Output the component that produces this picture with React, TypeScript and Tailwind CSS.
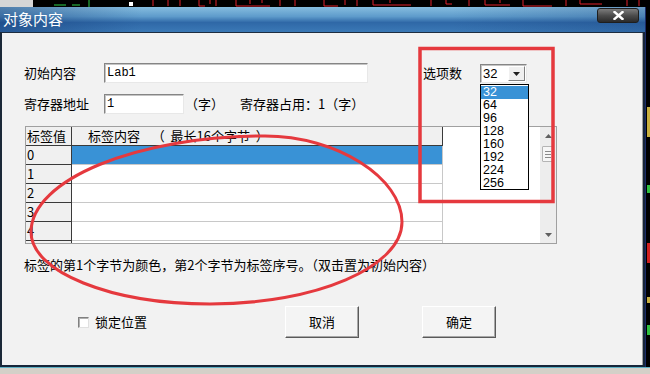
import type { ReactNode } from 'react';

const rows = ['0', '1', '2', '3', '4', ''];
const options = ['32', '64', '96', '128', '160', '192', '224', '256'];

function TopStrip() {
  return (
    <svg width="650" height="7" className="block shrink-0">
      <rect x="0" y="0" width="650" height="7" fill="#000" />
      <rect x="0" y="0" width="33" height="7" fill="#d6d6d6" />
      <path d="M54 5h12M72 5h8M89 0v7" stroke="#2fd04a" strokeWidth="1" fill="none" />
      <rect x="129" y="2" width="4" height="4" fill="#fff" />
      <path
        d="M153 0v6M168 0v6M180 0v6M199 0v6h6M210 0v4M216 0v6M236 0v6h34M250 0v4M262 0v3M280 0v6M295 0v6M324 0v6h14M345 0v5M357 0v6M373 0v5h38M390 0v3M431 0v6M446 0v4h6M469 0v6M485 0v5h25M500 0v3M523 0v6h29M566 0v6M580 0v4h22M627 0v6M639 0v6"
        stroke="#e0202a"
        strokeWidth="1"
        fill="none"
      />
    </svg>
  );
}

function RightStrip() {
  return (
    <svg width="5" height="360" className="block shrink-0">
      <rect x="0" y="0" width="5" height="360" fill="#000" />
      <rect x="0" y="0" width="1" height="360" fill="#1a2c6a" />
      <rect x="2" y="100" width="3" height="30" fill="#c8b040" />
      <rect x="2" y="178" width="3" height="8" fill="#30c040" />
      <rect x="2" y="236" width="3" height="20" fill="#d02020" />
      <rect x="2" y="290" width="3" height="6" fill="#c8b040" />
      <rect x="2" y="318" width="3" height="10" fill="#30c040" />
    </svg>
  );
}

function TitleBar() {
  return (
    <div className="h-[25px] shrink-0 flex items-start justify-between bg-[linear-gradient(90deg,rgba(15,50,110,0.45)_0%,rgba(255,255,255,0)_22%,rgba(255,255,255,0)_70%,rgba(15,50,110,0.25)_100%),linear-gradient(180deg,#86bddf_0%,#5e9bcb_38%,#2f68a7_62%,#3b79b6_100%)]">
      <span className="pl-[3px] pt-[3px] text-[15px] leading-[18px] text-white">对象内容</span>
      <div className="mt-[1px] mr-[6px] w-[42px] h-[15px] rounded-[3px] border border-[#1e1e1e] bg-[linear-gradient(180deg,#7c7c7c_0%,#4c4c4c_50%,#2a2a2a_100%)] flex items-center justify-center">
        <svg width="11" height="9" viewBox="0 0 11 9">
          <path d="M1.5 1l8 7M9.5 1l-8 7" stroke="#fff" strokeWidth="2.4" strokeLinecap="square" />
        </svg>
      </div>
    </div>
  );
}

function Sunken({ className, children }: { className: string; children?: ReactNode }) {
  return (
    <div
      className={`bg-white border border-t-[#858585] border-l-[#858585] border-b-[#e8e8e8] border-r-[#e8e8e8] shadow-[inset_1px_1px_0_#c4c4c4] ${className}`}
    >
      {children}
    </div>
  );
}

function OptionSelect() {
  return (
    <div className="relative w-[47px] h-[19px] mt-[1px]">
      <Sunken className="w-full h-full flex items-center justify-between">
        <span className="pl-[2px] font-['Liberation_Sans',sans-serif] text-[13px] leading-none">32</span>
        <div className="w-[17px] h-[15px] mr-[1px] bg-[#f0f0f0] border border-t-white border-l-white border-b-[#808080] border-r-[#808080] flex items-center justify-center">
          <svg width="7" height="4" viewBox="0 0 7 4">
            <path d="M0 0h7L3.5 4z" fill="#202020" />
          </svg>
        </div>
      </Sunken>
      <div className="absolute left-0 top-[20px] w-[49px] h-[106px] bg-white border border-black pt-[1px] z-10">
        {options.map((o, i) => (
          <div
            key={o}
            className={`h-[13px] pl-[2px] font-['Liberation_Sans',sans-serif] text-[12.5px] leading-[13px] ${
              i === 0 ? 'bg-[#3992d6] text-white' : 'text-black'
            }`}
          >
            {o}
          </div>
        ))}
      </div>
    </div>
  );
}

function LabelTable() {
  return (
    <div className="ml-[1px] mt-[12px] w-[532px] h-[118px] bg-white border border-[#a0a0a0] flex overflow-hidden">
      <div className="w-[514px] flex flex-col">
        <div className="flex h-[19px] shrink-0">
          <div className="w-[46px] bg-[#f0f0f0] border-r border-b border-[#3a3a3a] pl-[1px] leading-[18px]">标签值</div>
          <div className="w-[371px] bg-[#f0f0f0] border-r border-b border-[#3a3a3a] pl-[16px] leading-[18px] whitespace-pre">
            标签内容    （  最长16个字节  ）
          </div>
        </div>
        {rows.map((r, i) => (
          <div key={i} className="flex h-[19px] shrink-0">
            <div className="w-[46px] bg-[#f0f0f0] border-r border-b border-[#3a3a3a] pl-[1px] leading-[18px]">{r}</div>
            <div
              className={`w-[371px] border-r border-b border-[#c8c8c8] ${i === 0 ? 'bg-[#3992d6]' : 'bg-white'}`}
            />
          </div>
        ))}
      </div>
      <div className="w-[16px] bg-[#ededed] flex flex-col items-center">
        <div className="h-[17px] w-full flex items-center justify-center">
          <svg width="7" height="4" viewBox="0 0 7 4">
            <path d="M3.5 0L7 4H0z" fill="#606060" />
          </svg>
        </div>
        <div className="mt-[2px] w-[12px] h-[16px] bg-[#f6f6f6] border border-[#b4b4b4] rounded-[1px] flex flex-col items-center justify-center gap-[2px]">
          <div className="w-[6px] h-px bg-[#8a8a8a]" />
          <div className="w-[6px] h-px bg-[#8a8a8a]" />
          <div className="w-[6px] h-px bg-[#8a8a8a]" />
        </div>
        <div className="flex-1" />
        <div className="h-[17px] w-full flex items-center justify-center">
          <svg width="7" height="4" viewBox="0 0 7 4">
            <path d="M0 0h7L3.5 4z" fill="#606060" />
          </svg>
        </div>
      </div>
    </div>
  );
}

function Button({ label, className }: { label: string; className: string }) {
  return (
    <div
      className={`w-[74px] h-[32px] bg-[#f4f4f4] border border-t-white border-l-white border-b-[#5a5a5a] border-r-[#5a5a5a] shadow-[inset_-1px_-1px_0_#a8a8a8] flex items-center justify-center ${className}`}
    >
      {label}
    </div>
  );
}

function DialogBody() {
  return (
    <div className="flex-1 flex flex-col bg-[#f2f2f2] border-t border-t-[#1d2d40] border-l-2 border-l-[#1b2838] border-r-2 border-r-[#17263a] border-b-2 border-b-[#17263a] shadow-[inset_-1px_0_0_#a0a0a0] pl-[22px] pt-[30px]">
      {/* first line */}
      <div className="flex items-start h-[20px]">
        <span className="w-[80px] leading-[20px]">初始内容</span>
        <Sunken className="w-[264px] h-[20px] pl-[2px] flex items-center">
          <span className="font-['Liberation_Mono',monospace] text-[12px]">Lab1</span>
        </Sunken>
        <span className="ml-[55px] w-[57px] leading-[20px]">选项数</span>
        <OptionSelect />
      </div>

      {/* second line */}
      <div className="mt-[11px] flex items-center h-[20px]">
        <span className="w-[80px]">寄存器地址</span>
        <Sunken className="w-[80px] h-[20px] pl-[2px] flex items-center">
          <span className="font-['Liberation_Mono',monospace] text-[12px]">1</span>
        </Sunken>
        <span className="ml-[1px]">（字）</span>
        <span className="ml-[16px]">寄存器占用：1（字）</span>
      </div>

      <LabelTable />

      <p className="mt-[12px] leading-[17px]">标签的第1个字节为颜色，第2个字节为标签序号。（双击置为初始内容）</p>

      <div className="mt-[33px] flex items-center h-[32px]">
        <div className="ml-[54px] w-[207px] flex items-center">
          <div className="w-[11px] h-[11px] bg-white border border-t-[#808080] border-l-[#808080] border-b-[#e0e0e0] border-r-[#e0e0e0] shadow-[inset_1px_1px_0_#b0b0b0]" />
          <span className="ml-[6px]">锁定位置</span>
        </div>
        <Button label="取消" className="" />
        <Button label="确定" className="ml-[63px]" />
      </div>
    </div>
  );
}

function Annotations() {
  return (
    <svg width="650" height="374" className="absolute left-0 top-0 pointer-events-none z-20">
      <rect x="420" y="48.5" width="133" height="153" fill="none" stroke="#e5393e" strokeWidth="3.5" />
      <path
        d="M265 136 C337 136 402 178 402 222 C402 267 316 304 210 304 C111 304 31 272 31 232 C31 180 136 136 265 136 Z"
        fill="none"
        stroke="#e5393e"
        strokeWidth="3"
      />
    </svg>
  );
}

export default function App() {
  return (
    <div className="relative w-[650px] h-[374px] overflow-hidden bg-black flex flex-col font-['Noto_Sans_CJK_SC','Noto_Sans',sans-serif] text-[13px] text-black">
      <TopStrip />
      <div className="flex h-[360px] shrink-0">
        <div className="w-[645px] flex flex-col">
          <TitleBar />
          <DialogBody />
        </div>
        <RightStrip />
      </div>
      <div className="flex-1 bg-[#d4d0c8] border-t border-[#5fb0c4]" />
      <Annotations />
    </div>
  );
}
